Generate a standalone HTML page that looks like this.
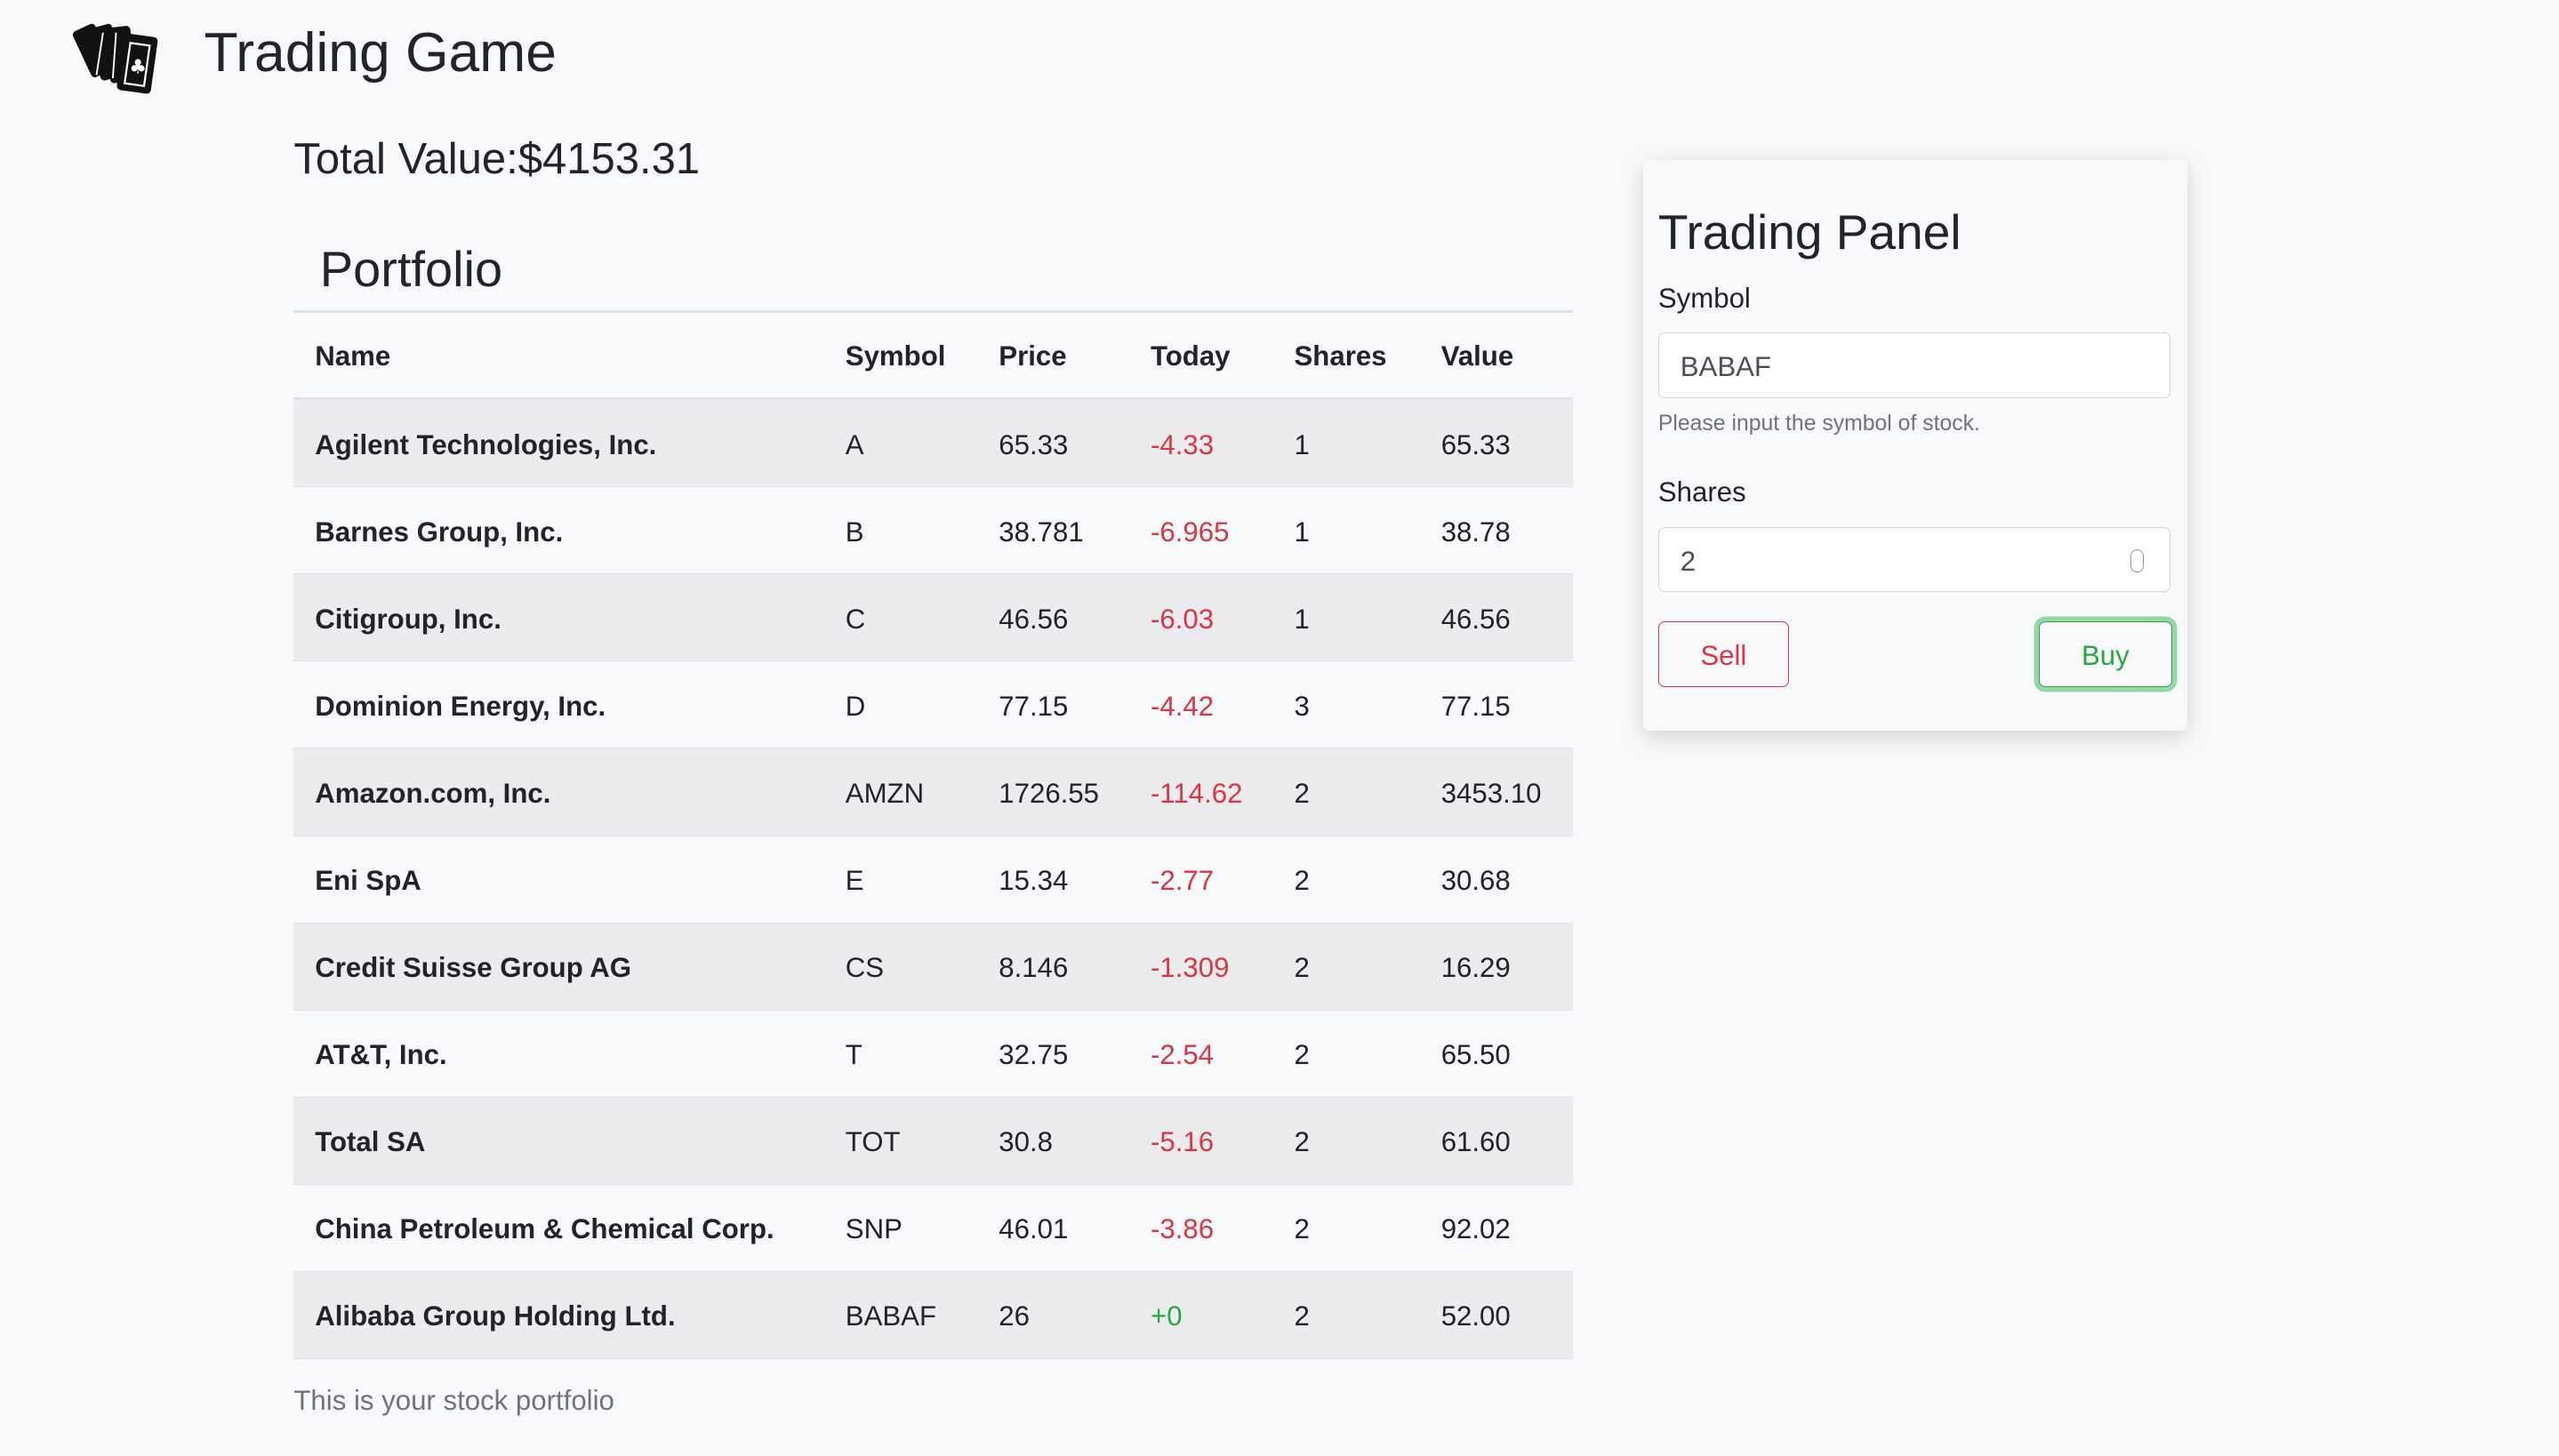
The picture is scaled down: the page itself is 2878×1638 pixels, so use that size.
<!DOCTYPE html>
<html><head><meta charset="utf-8"><style>
html,body{margin:0;padding:0;background:#f8f9fa;}
body{width:2878px;height:1638px;overflow:hidden;font-family:"Liberation Sans",sans-serif;color:#212529;}
#w{zoom:1.8355;position:relative;width:1568px;height:892px;}
.a{position:absolute;white-space:nowrap;}
table{position:absolute;left:180px;top:190px;width:784px;border-collapse:collapse;font-size:17px;border-top:2px solid #dee2e6;}
th{text-align:left;font-weight:bold;height:50px;border-bottom:2px solid #dee2e6;padding:2px 0 0 13px;}
td{height:50.9px;padding:2px 0 0 13px;border-bottom:1px solid #dee2e6;}
td:first-child{font-weight:bold;}
tr.s td{background:#ececee;}
.r{color:#dc3545}.g{color:#28a745}
.inp{position:absolute;left:1016px;width:313px;height:39px;border:1px solid #ced4da;border-radius:4px;background:#fff;font-size:17px;color:#495057;line-height:41px;text-indent:13px;}
.btn{position:absolute;top:381px;height:39px;border-radius:4px;font-size:17px;text-align:center;line-height:41px;background:#f8f9fa;}
</style></head><body><div id="w">
<svg class="a" style="left:44px;top:12px" width="54" height="48" viewBox="0 0 54 48">
<g fill="#111" stroke="#111">
<rect x="6" y="4" width="14" height="30" rx="2" transform="rotate(-25 13 19)"/>
<rect x="14" y="4" width="14" height="32" rx="2" transform="rotate(-15 21 20)"/>
<rect x="22" y="5" width="15" height="33" rx="2" transform="rotate(-7 29 21)"/>
<rect x="30" y="10" width="20" height="34" rx="2" transform="rotate(8 40 27)"/>
</g>
<rect x="34" y="15" width="12" height="25" fill="none" stroke="#fff" stroke-width="1.2" transform="rotate(8 40 27)"/>
<text x="35" y="33" font-size="12" fill="#fff" font-family="DejaVu Sans">♣</text>
<line x1="19" y1="8" x2="15" y2="34" stroke="#fff" stroke-width="1"/>
<line x1="27" y1="8" x2="25" y2="36" stroke="#fff" stroke-width="1"/>
</svg>
<div class="a" style="left:125px;top:13px;font-size:34px">Trading Game</div>
<div class="a" style="left:180px;top:82px;font-size:26.7px">Total Value:$4153.31</div>
<div class="a" style="left:196px;top:147px;font-size:30.5px">Portfolio</div>
<table>
<tr><th style="width:312px">Name</th><th style="width:81px">Symbol</th><th style="width:80px">Price</th><th style="width:75px">Today</th><th style="width:77px">Shares</th><th>Value</th></tr>
<tr class="s"><td>Agilent Technologies, Inc.</td><td>A</td><td>65.33</td><td class="r">-4.33</td><td>1</td><td>65.33</td></tr>
<tr><td>Barnes Group, Inc.</td><td>B</td><td>38.781</td><td class="r">-6.965</td><td>1</td><td>38.78</td></tr>
<tr class="s"><td>Citigroup, Inc.</td><td>C</td><td>46.56</td><td class="r">-6.03</td><td>1</td><td>46.56</td></tr>
<tr><td>Dominion Energy, Inc.</td><td>D</td><td>77.15</td><td class="r">-4.42</td><td>3</td><td>77.15</td></tr>
<tr class="s"><td>Amazon.com, Inc.</td><td>AMZN</td><td>1726.55</td><td class="r">-114.62</td><td>2</td><td>3453.10</td></tr>
<tr><td>Eni SpA</td><td>E</td><td>15.34</td><td class="r">-2.77</td><td>2</td><td>30.68</td></tr>
<tr class="s"><td>Credit Suisse Group AG</td><td>CS</td><td>8.146</td><td class="r">-1.309</td><td>2</td><td>16.29</td></tr>
<tr><td>AT&amp;T, Inc.</td><td>T</td><td>32.75</td><td class="r">-2.54</td><td>2</td><td>65.50</td></tr>
<tr class="s"><td>Total SA</td><td>TOT</td><td>30.8</td><td class="r">-5.16</td><td>2</td><td>61.60</td></tr>
<tr><td>China Petroleum &amp; Chemical Corp.</td><td>SNP</td><td>46.01</td><td class="r">-3.86</td><td>2</td><td>92.02</td></tr>
<tr class="s"><td>Alibaba Group Holding Ltd.</td><td>BABAF</td><td>26</td><td class="g">+0</td><td>2</td><td>52.00</td></tr>
</table>
<div class="a" style="left:180px;top:849px;font-size:17px;color:#6c757d">This is your stock portfolio</div>

<div class="a" style="left:1007px;top:98px;width:333px;height:350px;background:#f8f9fa;border-radius:4px;box-shadow:0 4px 14px rgba(0,0,0,.15)"></div>
<div class="a" style="left:1016px;top:125px;font-size:30px">Trading Panel</div>
<div class="a" style="left:1016px;top:173px;font-size:17px">Symbol</div>
<div class="inp" style="top:204px">BABAF</div>
<div class="a" style="left:1016px;top:252px;font-size:13.5px;color:#6c757d">Please input the symbol of stock.</div>
<div class="a" style="left:1016px;top:292px;font-size:17px">Shares</div>
<div class="inp" style="top:323px">2<span style="position:absolute;right:16px;top:13px;width:7px;height:13px;border:1px solid #999;border-radius:4px;background:#fff"></span></div>
<div class="btn" style="left:1016px;width:79px;border:1px solid #dc3545;color:#dc3545">Sell</div>
<div class="btn" style="left:1249px;width:81px;border:1px solid #28a745;color:#28a745;box-shadow:0 0 0 3px rgba(40,167,69,.45)">Buy</div>
</div></body></html>
